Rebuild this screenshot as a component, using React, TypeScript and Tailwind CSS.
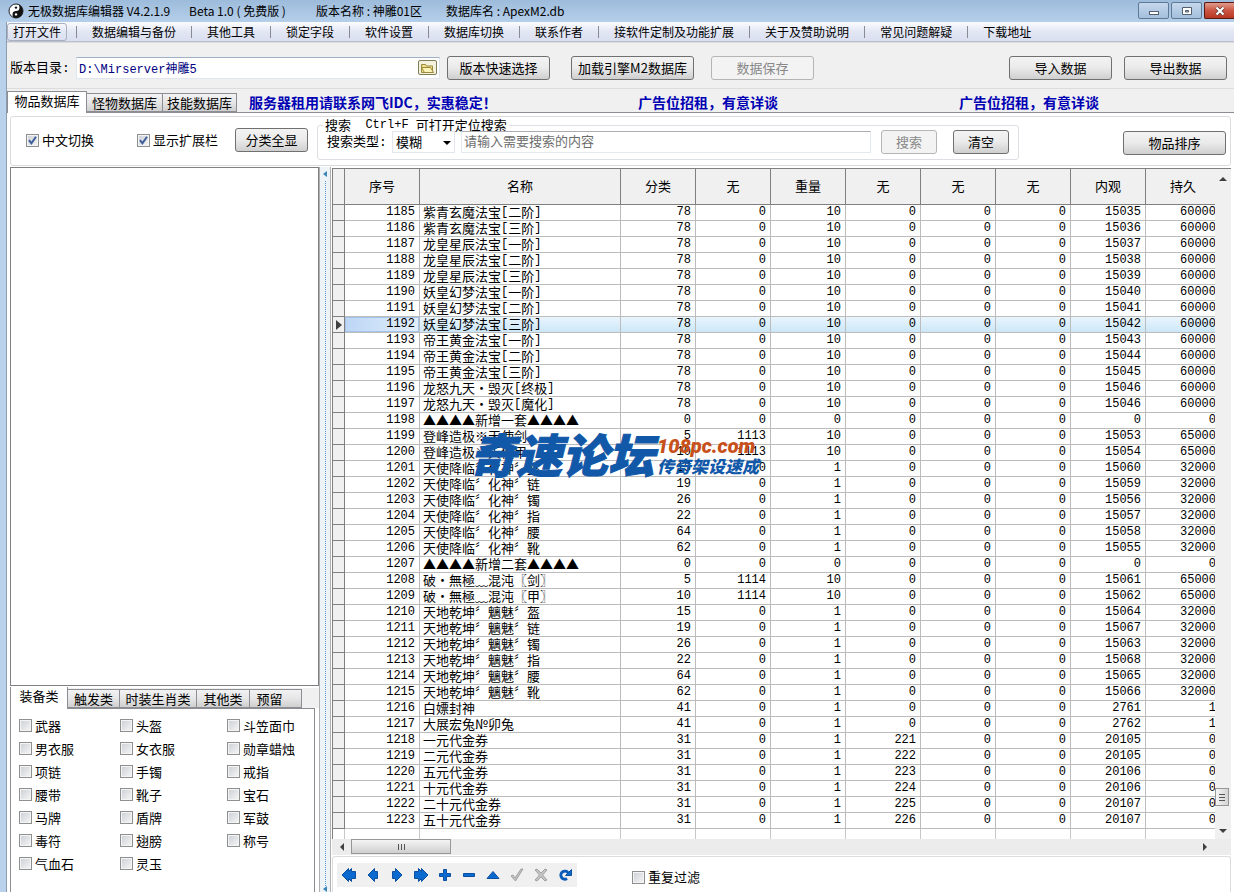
import { useState, type ReactNode } from 'react';

type Row = [number, string, number, number, number, number, number, number, number, number];

const rows: Row[] = [
  [1185, '紫青玄魔法宝[二阶]', 78, 0, 10, 0, 0, 0, 15035, 60000],
  [1186, '紫青玄魔法宝[三阶]', 78, 0, 10, 0, 0, 0, 15036, 60000],
  [1187, '龙皇星辰法宝[一阶]', 78, 0, 10, 0, 0, 0, 15037, 60000],
  [1188, '龙皇星辰法宝[二阶]', 78, 0, 10, 0, 0, 0, 15038, 60000],
  [1189, '龙皇星辰法宝[三阶]', 78, 0, 10, 0, 0, 0, 15039, 60000],
  [1190, '妖皇幻梦法宝[一阶]', 78, 0, 10, 0, 0, 0, 15040, 60000],
  [1191, '妖皇幻梦法宝[二阶]', 78, 0, 10, 0, 0, 0, 15041, 60000],
  [1192, '妖皇幻梦法宝[三阶]', 78, 0, 10, 0, 0, 0, 15042, 60000],
  [1193, '帝王黄金法宝[一阶]', 78, 0, 10, 0, 0, 0, 15043, 60000],
  [1194, '帝王黄金法宝[二阶]', 78, 0, 10, 0, 0, 0, 15044, 60000],
  [1195, '帝王黄金法宝[三阶]', 78, 0, 10, 0, 0, 0, 15045, 60000],
  [1196, '龙怒九天・毁灭[终极]', 78, 0, 10, 0, 0, 0, 15046, 60000],
  [1197, '龙怒九天・毁灭[魔化]', 78, 0, 10, 0, 0, 0, 15046, 60000],
  [1198, '▲▲▲▲新增一套▲▲▲▲', 0, 0, 0, 0, 0, 0, 0, 0],
  [1199, '登峰造极※天使剑', 5, 1113, 10, 0, 0, 0, 15053, 65000],
  [1200, '登峰造极※天使甲', 10, 1113, 10, 0, 0, 0, 15054, 65000],
  [1201, '天使降临〞化神〞盔', 15, 0, 1, 0, 0, 0, 15060, 32000],
  [1202, '天使降临〞化神〞链', 19, 0, 1, 0, 0, 0, 15059, 32000],
  [1203, '天使降临〞化神〞镯', 26, 0, 1, 0, 0, 0, 15056, 32000],
  [1204, '天使降临〞化神〞指', 22, 0, 1, 0, 0, 0, 15057, 32000],
  [1205, '天使降临〞化神〞腰', 64, 0, 1, 0, 0, 0, 15058, 32000],
  [1206, '天使降临〞化神〞靴', 62, 0, 1, 0, 0, 0, 15055, 32000],
  [1207, '▲▲▲▲新增二套▲▲▲▲', 0, 0, 0, 0, 0, 0, 0, 0],
  [1208, '破・無極﹏混沌〖剑〗', 5, 1114, 10, 0, 0, 0, 15061, 65000],
  [1209, '破・無極﹏混沌〖甲〗', 10, 1114, 10, 0, 0, 0, 15062, 65000],
  [1210, '天地乾坤〞魑魅〞盔', 15, 0, 1, 0, 0, 0, 15064, 32000],
  [1211, '天地乾坤〞魑魅〞链', 19, 0, 1, 0, 0, 0, 15067, 32000],
  [1212, '天地乾坤〞魑魅〞镯', 26, 0, 1, 0, 0, 0, 15063, 32000],
  [1213, '天地乾坤〞魑魅〞指', 22, 0, 1, 0, 0, 0, 15068, 32000],
  [1214, '天地乾坤〞魑魅〞腰', 64, 0, 1, 0, 0, 0, 15065, 32000],
  [1215, '天地乾坤〞魑魅〞靴', 62, 0, 1, 0, 0, 0, 15066, 32000],
  [1216, '白嫖封神', 41, 0, 1, 0, 0, 0, 2761, 1],
  [1217, '大展宏兔№卯兔', 41, 0, 1, 0, 0, 0, 2762, 1],
  [1218, '一元代金券', 31, 0, 1, 221, 0, 0, 20105, 0],
  [1219, '二元代金券', 31, 0, 1, 222, 0, 0, 20105, 0],
  [1220, '五元代金券', 31, 0, 1, 223, 0, 0, 20106, 0],
  [1221, '十元代金券', 31, 0, 1, 224, 0, 0, 20106, 0],
  [1222, '二十元代金券', 31, 0, 1, 225, 0, 0, 20107, 0],
  [1223, '五十元代金券', 31, 0, 1, 226, 0, 0, 20107, 0],
];

const columns = ['序号', '名称', '分类', '无', '重量', '无', '无', '无', '内观', '持久'];

const menus = [
  '数据编辑与备份', '其他工具', '锁定字段', '软件设置', '数据库切换', '联系作者',
  '接软件定制及功能扩展', '关于及赞助说明', '常见问题解疑', '下载地址',
];

const categories = [
  '武器', '头盔', '斗笠面巾', '男衣服', '女衣服', '勋章蜡烛', '项链', '手镯', '戒指', '腰带',
  '靴子', '宝石', '马牌', '盾牌', '军鼓', '毒符', '翅膀', '称号', '气血石', '灵玉',
];

function Btn({ children, className = '', disabled = false }: { children: ReactNode; className?: string; disabled?: boolean }) {
  const look = disabled
    ? 'border-[#b5b5b5] bg-[#f3f3f3] text-[#888]'
    : 'border-[#707070] bg-linear-to-b from-[#f3f3f3] from-0% via-[#ebebeb] via-48% to-[#cfcfcf]';
  return (
    <button disabled={disabled} className={`h-6 shrink-0 rounded-[3px] border text-[13px] leading-5 whitespace-nowrap ${look} ${className}`}>
      {children}
    </button>
  );
}

function Check({ label, defaultChecked = false, className = '' }: { label: string; defaultChecked?: boolean; className?: string }) {
  return (
    <label className={`flex items-center gap-[3px] text-[13px] leading-4 whitespace-nowrap ${className}`}>
      <span className="relative size-[13px] shrink-0">
        <input
          type="checkbox"
          defaultChecked={defaultChecked}
          className="peer block size-[13px] appearance-none border border-[#8e8f8f] bg-linear-to-br from-[#cbcfd5] to-[#f6f6f6] shadow-[inset_0_0_0_1px_#f4f4f4]"
        />
        <svg viewBox="0 0 13 13" className="pointer-events-none absolute inset-0 hidden size-[13px] peer-checked:block">
          <path d="M3 6.2 5.4 9.4 10 2.8" fill="none" stroke="#3f5f9c" strokeWidth="2" />
        </svg>
      </span>
      {label}
    </label>
  );
}

function Tab({ children, active = false, className = '' }: { children: ReactNode; active?: boolean; className?: string }) {
  const look = active
    ? 'z-10 -mb-px h-[22px] border-b-0 bg-white pb-1'
    : 'h-[19px] -ml-px bg-linear-to-b from-[#f2f2f2] via-[#e6e6e6] to-[#cfcfcf]';
  return (
    <button role="tab" aria-selected={active} className={`relative border border-[#8c8e94] text-center text-[13px] leading-4 whitespace-nowrap ${look} ${className}`}>
      {children}
    </button>
  );
}

// half-width brackets come from the mono face, everything else is full width
function ItemName({ name }: { name: string }) {
  return (
    <div className="flex h-[15px] items-start leading-[13px]">
      {name.split(/([[\]])/).map((part, i) =>
        part === '[' || part === ']' ? (
          <span key={i} className="font-['Liberation_Mono'] text-xs leading-[14px]">{part}</span>
        ) : (
          <span key={i}>{part}</span>
        )
      )}
    </div>
  );
}

function Arrow({ d, label, className = '' }: { d: string; label: string; className?: string }) {
  return (
    <button aria-label={label} className={`flex shrink-0 items-center justify-center ${className}`}>
      <svg viewBox="0 0 8 8" className="size-2"><path d={d} fill="#404040" /></svg>
    </button>
  );
}

function NavButton({ label, children, off = false }: { label: string; children: ReactNode; off?: boolean }) {
  return (
    <button aria-label={label} disabled={off} className="flex h-6 w-6 items-center justify-center">
      <svg viewBox="0 0 16 16" className={`size-4 ${off ? 'fill-[#c4c4c4] stroke-[#a0a0a0]' : 'fill-[#0a6ad0] stroke-[#0b4fa0]'}`} strokeWidth="1">
        {children}
      </svg>
    </button>
  );
}

function TitleBar() {
  return (
    <header className="flex h-[22px] shrink-0 items-start bg-linear-to-b from-[#9dbbdb] to-[#b5cfea] pl-2 text-xs leading-[21px]">
      <svg viewBox="0 0 16 16" className="mt-[3px] mr-1 size-4 shrink-0">
        <circle cx="8" cy="8" r="7" fill="#fff" stroke="#222" />
        <path d="M8 1a7 7 0 0 1 0 14 3.5 3.5 0 0 1 0-7 3.5 3.5 0 0 0 0-7Z" fill="#111" />
        <circle cx="8" cy="4.6" r="1.2" fill="#111" />
        <circle cx="8" cy="11.4" r="1.2" fill="#fff" />
      </svg>
      <h1 className="flex whitespace-pre">
        <span className="w-[161px]">无极数据库编辑器 V4.2.1.9</span>
        <span className="w-[127px]">Beta 1.0 ( 免费版 )</span>
        <span className="w-[130px]">版本名称 : 神雕01区</span>
        <span>数据库名 : ApexM2.db</span>
      </h1>
      <div className="mt-0.5 ml-auto flex gap-0.5">
        <button aria-label="最小化" className="flex h-[17px] w-[31px] items-center justify-center rounded-[2px] border border-[#5f7893] bg-linear-to-b from-[#c5d8ec] to-[#a3bfdc]">
          <svg viewBox="0 0 12 10" className="h-2.5 w-3"><rect x="1.5" y="5.5" width="9" height="3" fill="#fff" stroke="#555f6b" /></svg>
        </button>
        <button aria-label="最大化" className="flex h-[17px] w-[31px] items-center justify-center rounded-[2px] border border-[#5f7893] bg-linear-to-b from-[#c5d8ec] to-[#a3bfdc]">
          <svg viewBox="0 0 12 10" className="h-2.5 w-3"><path d="M1.500 1.500h9v7h-9zM4.500 4.500h3v1.500h-3z" fill="#fff" fillRule="evenodd" stroke="#555f6b" /></svg>
        </button>
        <button aria-label="关闭" className="flex h-[17px] w-[30px] items-center justify-center rounded-l-[2px] border border-r-0 border-[#5a1a14] bg-linear-to-b from-[#e09a8c] via-[#cb5542] to-[#b83822]">
          <svg viewBox="0 0 12 10" className="h-2.5 w-3">
            <path d="m2.500 1.500 7 7m0-7-7 7" stroke="#5a3a3a" strokeWidth="3.600" />
            <path d="m2.500 1.500 7 7m0-7-7 7" stroke="#fff" strokeWidth="2.200" />
          </svg>
        </button>
      </div>
    </header>
  );
}

function PathBar() {
  return (
    <section className="flex h-[47px] shrink-0 items-center border-y border-[#dcdcdc] pt-1 pr-[7px] pl-[3px] text-[13px]">
      <label htmlFor="dir" className="w-[66px] shrink-0 whitespace-nowrap">版本目录<span className="font-['Liberation_Mono']">:</span></label>
      <div className="flex h-[22px] w-[364px] min-w-0 items-center border border-[#dfe6ee] border-t-[#9fb0c4] bg-white pr-0.5">
        <input id="dir" defaultValue="D:\Mirserver神雕5" className="h-full min-w-0 flex-1 px-0.5 font-['Liberation_Mono','Noto_Sans_CJK_SC',monospace] text-xs text-[#000080] outline-none" />
        <button aria-label="浏览" className="flex h-[15px] w-[19px] items-center justify-center rounded-[2px] border border-[#7d7d5a] bg-[#f4f2dc]">
          <svg viewBox="0 0 16 12" className="h-3 w-4">
            <path d="M1.500 10.500v-8h4l1 1.500h6v6.500z" fill="#f3e28c" stroke="#9a8a3c" />
            <path d="m1.500 5.500 9 0 3 5h-9z" fill="#fbf3b5" stroke="#9a8a3c" />
          </svg>
        </button>
      </div>
      <Btn className="ml-[7px] w-[103px]">版本快速选择</Btn>
      <Btn className="ml-[21px] w-[123px]">加载引擎M2数据库</Btn>
      <Btn className="ml-[17px] w-[103px]" disabled>数据保存</Btn>
      <Btn className="ml-auto w-[103px]">导入数据</Btn>
      <Btn className="ml-3 w-[103px]">导出数据</Btn>
    </section>
  );
}

function FilterBar() {
  return (
    <section className="mx-[3px] mt-[3px] flex h-[50px] shrink-0 items-start rounded-[3px] border border-[#dcdcdc] pr-1 pl-[15px]">
      <Check label="中文切换" defaultChecked className="mt-[15px] w-[111px]" />
      <Check label="显示扩展栏" defaultChecked className="mt-[15px] w-[98px]" />
      <Btn className="mt-[11px] w-[73px]">分类全显</Btn>
      <fieldset className="mt-px ml-[9px] h-[42px] min-w-0 rounded-[3px] border border-[#dcdfe3] px-[9px]">
        <legend className="-ml-1 flex px-0.5 text-[13px] leading-[14px] whitespace-pre">
          搜索<span className="font-['Liberation_Mono'] text-xs leading-[14px]">{'  Ctrl+F '}</span>可打开定位搜索
        </legend>
        <div className="-mt-0.5 flex items-center text-[13px]">
          <label htmlFor="kind" className="w-[65px] shrink-0 whitespace-nowrap">搜索类型<span className="font-['Liberation_Mono']">:</span></label>
          <span className="relative">
            <select id="kind" className="block h-[22px] w-[63px] appearance-none border border-[#e3e6ea] bg-white px-[3px] leading-4 outline-none">
              <option>模糊</option>
              <option>精确</option>
            </select>
            <svg viewBox="0 0 8 4" className="pointer-events-none absolute top-[10px] right-1 h-1 w-2"><path d="M0 0h8L4 4z" /></svg>
          </span>
          <input aria-label="搜索内容" placeholder="请输入需要搜索的内容" className="ml-1.5 h-[22px] w-[410px] min-w-0 border border-[#e3e9ef] border-t-[#abadb3] px-0.5 pb-1 leading-4 placeholder:text-[#6d6d6d] outline-none" />
          <Btn className="ml-2.5 w-14" disabled>搜索</Btn>
          <Btn className="ml-4 w-14">清空</Btn>
        </div>
      </fieldset>
      <Btn className="mt-3.5 ml-auto w-[103px]">物品排序</Btn>
    </section>
  );
}

function SidePane() {
  return (
    <aside className="flex w-[309px] shrink-0 flex-col">
      <div className="min-h-0 flex-1 border border-[#7f8083] bg-white" />
      <div role="tablist" className="mt-0.5 flex h-5 shrink-0 items-end bg-[#f0f0f0]">
        <Tab active className="w-[58px] border-t-0">装备类</Tab>
        <Tab className="w-[53px]">触发类</Tab>
        <Tab className="w-[78px]">时装生肖类</Tab>
        <Tab className="w-[54px]">其他类</Tab>
        <Tab className="w-[53px] pr-3">预留</Tab>
      </div>
      <div className="mr-1 grid h-[184px] shrink-0 grid-cols-[101px_107px_1fr] content-start border border-b-0 border-[#8c8e94] bg-white pt-[5px] pl-2">
        {categories.map((c) => (
          <Check key={c} label={c} className="h-[23px]" />
        ))}
      </div>
    </aside>
  );
}

function ItemTable() {
  const [current, setCurrent] = useState(1192);
  const bottom = ['', ...columns];

  return (
    <div className="min-w-0 flex-1 overflow-hidden">
      <table className="w-[888px] table-fixed border-separate border-spacing-0 text-[13px]">
        <colgroup>
          <col className="w-3" />
          <col className="w-[75px]" />
          <col className="w-[201px]" />
          {columns.slice(2).map((_, i) => (
            <col key={i} className="w-[75px]" />
          ))}
        </colgroup>
        <thead>
          <tr>
            <th className="h-9 border-r border-b border-[#808080] bg-[#f0f0f0]" />
            {columns.map((c, i) => (
              <th key={i} className="h-9 border-r border-b border-[#808080] bg-[#f0f0f0] p-0 pb-0.5 font-normal">{c}</th>
            ))}
          </tr>
        </thead>
        <tbody>
          {rows.map(([id, name, ...values]) => {
            const on = id === current;
            return (
              <tr key={id} onClick={() => setCurrent(id)} className={on ? 'bg-linear-to-b from-[#eaf5fd] to-[#c9e6f8]' : 'bg-white'}>
                <td className="h-4 border-r border-b border-[#808080] bg-[#f0f0f0] p-0">
                  {on && <svg viewBox="0 0 6 10" className="ml-[3px] h-2.5 w-1.5"><path d="M0 0v10l6-5z" fill="#404040" /></svg>}
                </td>
                <td className={`h-4 border-r border-b border-[#bcbcbc] p-0 pr-1 text-right font-['Liberation_Mono',monospace] text-xs leading-[15px] ${on ? 'bg-linear-to-r from-[#bcd6f5] to-[#e2effc] shadow-[inset_0_0_0_1px_#a3c4e8]' : ''}`}>{id}</td>
                <td className="h-4 border-r border-b border-[#bcbcbc] p-0 pl-[3px] whitespace-nowrap"><ItemName name={name} /></td>
                {values.map((v, i) => (
                  <td key={i} className="h-4 border-r border-b border-[#bcbcbc] p-0 pr-1 text-right font-['Liberation_Mono',monospace] text-xs leading-[15px]">{v}</td>
                ))}
              </tr>
            );
          })}
          <tr>
            {bottom.map((_, i) => (
              <td key={i} className="h-2.5 border-r border-[#c8c8c8] p-0" />
            ))}
          </tr>
        </tbody>
      </table>
    </div>
  );
}

function Watermark() {
  return (
    <div className="pointer-events-none absolute top-[261px] left-[138px] flex gap-[3px] font-black whitespace-nowrap text-[#1258a8] italic">
      <span className="text-[46px] leading-[50px] [-webkit-text-stroke:1px_#1258a8]">奇速论坛</span>
      <span className="flex flex-col pt-2">
        <span className="font-['Roboto'] text-xl leading-5 text-[#c8501a]">108pc.com</span>
        <span className="text-[17px] leading-5">传奇架设速成</span>
      </span>
    </div>
  );
}

function GridPane() {
  return (
    <main className="relative flex min-w-0 flex-1 flex-col pt-px">
      <div className="flex h-[671px] border-t border-l border-[#808080]">
        <ItemTable />
        <div className="flex w-4 shrink-0 flex-col bg-[#f0f0f0]">
          <Arrow label="向上" d="M0 6h8L4 2z" className="h-5" />
          <div className="flex-1" />
          <button aria-label="垂直滚动" className="mb-[17px] flex h-[18px] w-3.5 flex-col items-center justify-center gap-0.5 border border-[#979797] bg-linear-to-r from-[#f5f5f5] to-[#d4d4d4]">
            <i className="h-px w-1.5 bg-[#555]" />
            <i className="h-px w-1.5 bg-[#555]" />
            <i className="h-px w-1.5 bg-[#555]" />
          </button>
          <Arrow label="向下" d="M0 2h8L4 6z" className="h-4" />
        </div>
      </div>
      <div className="flex h-4 shrink-0 bg-[#ececec] pr-[18px]">
        <Arrow label="向左" d="M6 0v8L2 4z" className="w-[19px]" />
        <button aria-label="水平滚动" className="flex h-[15px] w-[100px] items-center justify-center gap-0.5 border border-[#979797] bg-linear-to-b from-[#f5f5f5] to-[#cfcfcf]">
          <i className="h-1.5 w-px bg-[#555]" />
          <i className="h-1.5 w-px bg-[#555]" />
          <i className="h-1.5 w-px bg-[#555]" />
        </button>
        <Arrow label="向右" d="M2 0v8l4-4z" className="ml-auto w-4" />
      </div>
      <div className="mt-px flex flex-1 items-start rounded-t-[3px] border border-b-0 border-[#dcdcdc] pt-1.5 pl-1">
        <div className="flex bg-[#f0f0f0]">
          <NavButton label="首条"><path d="M1 8 7.500 1.500v3l3-3v3h4v7h-4v3l-3-3v3z" /></NavButton>
          <NavButton label="上一条"><path d="M3 8 9.500 1.500v3h3v7h-3v3z" /></NavButton>
          <NavButton label="下一条"><path d="M13 8 6.500 1.500v3h-3v7h3v3z" /></NavButton>
          <NavButton label="末条"><path d="M15 8 8.500 1.500v3l-3-3v3h-4v7h4v3l3-3v3z" /></NavButton>
          <NavButton label="新增"><path d="M6.500 2.500h3v4h4v3h-4v4h-3v-4h-4v-3h4z" /></NavButton>
          <NavButton label="删除"><path d="M2.500 6.500h11v3h-11z" /></NavButton>
          <NavButton label="编辑"><path d="M8 4.500 14 11.500H2z" /></NavButton>
          <NavButton label="确认" off><path d="m2 9 2-1 2 3 6-9h2L6.500 14z" /></NavButton>
          <NavButton label="取消" off><path d="m2 3 2-1 4 4 4-4 2 1-4.500 5L14 13l-2 1-4-4-4 4-2-1 4.500-5z" /></NavButton>
          <NavButton label="刷新">
            <path d="M10 11.600A4 4 0 1 1 11.200 6" fill="none" stroke="#0b5cb8" strokeWidth="3" />
            <path d="M8.500 8.500h6v-6z" />
          </NavButton>
        </div>
        <Check label="重复过滤" className="mt-1.5 ml-[55px]" />
      </div>
      <Watermark />
    </main>
  );
}

export default function App() {
  return (
    <div className="flex h-screen flex-col overflow-hidden bg-[#b9d1ea] font-['Noto_Sans_CJK_SC',sans-serif] text-black">
      <TitleBar />
      <div className="ml-1.5 flex min-h-0 flex-1 flex-col border-l border-[#8d9db0] bg-[#f0f0f0]">
        <nav className="flex h-5 shrink-0 items-center border-b border-[#b9bfcf] bg-linear-to-b from-[#fbfcfe] via-[#e3e7f4] to-[#dadff0] text-xs leading-[18px] whitespace-nowrap">
          <button className="mr-[9px] h-[18px] w-[60px] rounded-[3px] border border-[#a9b0c0] leading-4">打开文件</button>
          {menus.map((m) => (
            <button key={m} className="flex items-center gap-[15px] pr-[15px]">
              <i className="h-3 w-px bg-[#8a8a94]" />
              {m}
            </button>
          ))}
        </nav>
        <PathBar />
        <div className="flex h-6 shrink-0 items-end border-b border-[#8c8e94]">
          <div role="tablist" className="flex items-end">
            <Tab active className="w-20">物品数据库</Tab>
            <Tab className="w-[77px]">怪物数据库</Tab>
            <Tab className="w-[75px]">技能数据库</Tab>
          </div>
          <div className="ml-3 flex text-sm leading-5 font-bold whitespace-nowrap text-[#0000b4]">
            <span className="w-[389px]">服务器租用请联系网飞IDC，实惠稳定！</span>
            <span className="w-[321px]">广告位招租，有意详谈</span>
            <span>广告位招租，有意详谈</span>
          </div>
        </div>
        <div className="flex min-h-0 flex-1 flex-col bg-white">
          <FilterBar />
          <div className="mt-px flex min-h-0 flex-1 pr-[3px] pl-[3px]">
            <SidePane />
            <div className="mr-px flex w-3 shrink-0 flex-col items-center border-x border-[#b0b0b0] bg-[#eef3f8] pt-1">
              <svg viewBox="0 0 4 6" className="h-1.5 w-1"><path d="M4 0v6L0 3z" fill="#3b86b8" /></svg>
              <div className="mt-1 flex-1 border-l border-dotted border-[#5b9bd5]" />
              <svg viewBox="0 0 4 6" className="h-1.5 w-1"><path d="M4 0v6L0 3z" fill="#3b86b8" /></svg>
            </div>
            <GridPane />
          </div>
        </div>
      </div>
    </div>
  );
}
